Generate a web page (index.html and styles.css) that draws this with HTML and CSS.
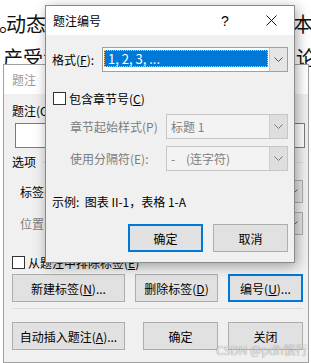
FILE: index.html
```html
<!DOCTYPE html>
<html lang="zh-CN">
<head>
  <meta charset="UTF-8">
  <title>题注编号</title>
  <link rel="stylesheet" href="styles.css">
</head>
<body>
  <div class="doc">
    <div class="doc-line line-1"><span><span class="stop">。</span>动态</span><span>本和</span></div>
    <div class="doc-line line-2"><span>产受汉</span><span>论七</span></div>
  </div>

  <div class="win win-back">
    <div class="titlebar titlebar-back">题注</div>
    <div class="back-body">
      <div class="back-label">题注(C):</div>
      <div class="back-input"></div>
      <div class="group-row">
        <span>选项</span>
        <span class="group-line"></span>
      </div>
      <div class="back-row">
        <span class="indent">标签(L):</span>
        <div class="combo combo-back"><span class="combo-value"></span><span class="combo-arrow"><svg width="9" height="5" viewBox="0 0 9 5"><polyline points="0.5,0.5 4.5,4.5 8.5,0.5" fill="none" stroke="#606060"/></svg></span></div>
      </div>
      <div class="back-row row-pos">
        <span class="indent disabled">位置(P):</span>
        <div class="combo combo-back"><span class="combo-value"></span><span class="combo-arrow"><svg width="9" height="5" viewBox="0 0 9 5"><polyline points="0.5,0.5 4.5,4.5 8.5,0.5" fill="none" stroke="#606060"/></svg></span></div>
      </div>
      <div class="check-row back-check">
        <span class="checkbox"></span>
        <span>从题注中排除标签(<u>E</u>)</span>
      </div>
      <div class="btn-row back-btns">
        <button class="btn btn-wide">新建标签(<u>N</u>)...</button>
        <button class="btn btn-mid">删除标签(<u>D</u>)</button>
        <button class="btn btn-default">编号(<u>U</u>)...</button>
      </div>
      <div class="separator"></div>
      <div class="btn-row back-btns-2">
        <button class="btn btn-wide">自动插入题注(<u>A</u>)...</button>
        <button class="btn btn-ok">确定</button>
        <button class="btn">关闭</button>
      </div>
    </div>
  </div>

  <div class="win win-front">
    <div class="titlebar titlebar-front">
      <span class="title-text">题注编号</span>
      <span class="tb-btn">?</span>
      <span class="tb-btn">
        <svg width="11" height="11" viewBox="0 0 11 11"><path d="M0.5 0.5 L10.5 10.5 M10.5 0.5 L0.5 10.5" stroke="#111" stroke-width="1"/></svg>
      </span>
    </div>
    <div class="front-body">
      <div class="form-row row-format">
        <span>格式(<u>F</u>):</span>
        <div class="combo combo-active">
          <span class="combo-value"><span class="selected">1, 2, 3, ...</span></span>
          <span class="combo-arrow"><svg width="9" height="5" viewBox="0 0 9 5"><polyline points="0.5,0.5 4.5,4.5 8.5,0.5" fill="none" stroke="#505050"/></svg></span>
        </div>
      </div>
      <div class="check-row front-check">
        <span class="checkbox"></span>
        <span>包含章节号(<u>C</u>)</span>
      </div>
      <div class="form-row row-sub">
        <span class="sub-label disabled">章节起始样式(P)</span>
        <div class="combo combo-disabled">
          <span class="combo-value">标题 1</span>
          <span class="combo-arrow"><svg width="9" height="5" viewBox="0 0 9 5"><polyline points="0.5,0.5 4.5,4.5 8.5,0.5" fill="none" stroke="#7a7a7a"/></svg></span>
        </div>
      </div>
      <div class="form-row row-sub row-sep">
        <span class="sub-label disabled">使用分隔符(E):</span>
        <div class="combo combo-disabled">
          <span class="combo-value">-&nbsp;&nbsp;&nbsp;&nbsp;(连字符)</span>
          <span class="combo-arrow"><svg width="9" height="5" viewBox="0 0 9 5"><polyline points="0.5,0.5 4.5,4.5 8.5,0.5" fill="none" stroke="#7a7a7a"/></svg></span>
        </div>
      </div>
      <div class="example">示例:&nbsp; 图表 II-1，表格 1-A</div>
      <div class="btn-row front-btns">
        <button class="btn btn-default">确定</button>
        <button class="btn">取消</button>
      </div>
    </div>
  </div>

  <div class="watermark">CSDN @pdh慎行</div>
</body>
</html>
```

FILE: styles.css
```css
body {
  margin: 0;
  width: 311px;
  height: 363px;
  overflow: hidden;
  position: relative;
  background-color: #fff;
  font-family: "Noto Sans CJK SC", sans-serif;
  font-size: 12px;
  color: #000;
}

u {
  text-underline-offset: 1px;
}

/* document behind the dialogs */
.doc {
  font-size: 20px;
  line-height: 20px;
  color: #111;
}

.doc-line {
  display: grid;
  grid-template-columns: 293px auto;
  white-space: nowrap;
}

.line-1 {
  padding-top: 14px;
}

.line-2 {
  padding-top: 14px;
  padding-left: 3px;
}

.stop {
  margin-left: -1px;
  margin-right: -13px;
}

/* windows */
.win {
  position: absolute;
  box-sizing: border-box;
  background-color: #f0f0f0;
}

.win-back {
  left: 3px;
  top: 64px;
  width: 306px;
  height: 299px;
  border: 1px solid #a0a0a0;
}

.win-front {
  left: 45px;
  top: 5px;
  width: 250px;
  height: 258px;
  border: 1px solid #8a8a8a;
  box-shadow: 2px 3px 12px rgba(0, 0, 0, 0.35);
}

.titlebar {
  height: 29px;
  background-color: #fff;
  display: flex;
  align-items: center;
}

.titlebar-back {
  padding-left: 8px;
  color: #999;
}

.titlebar-front {
  padding-left: 7px;
}

.title-text {
  flex: 1;
}

.tb-btn {
  width: 46px;
  height: 29px;
  display: flex;
  align-items: center;
  justify-content: center;
  font-family: "Liberation Sans", sans-serif;
  font-size: 14px;
}

.disabled {
  color: #7d7d7d;
}

/* combo boxes */
.combo {
  display: flex;
  height: 25px;
  box-sizing: border-box;
  border: 1px solid #adadad;
  background-color: #fff;
}

.combo-value {
  flex: 1;
  display: flex;
  align-items: center;
  padding-left: 3px;
}

.combo-arrow {
  width: 17px;
  display: flex;
  align-items: center;
  justify-content: center;
  background-color: #e5e5e5;
  border-left: 1px solid #c8c8c8;
}

.combo-active {
  width: 186px;
  margin-left: auto;
  border-color: #a0a0a0;
}

.combo-active .combo-value {
  padding: 2px 1px 4px 1px;
  align-items: stretch;
}

.selected {
  flex: 1;
  display: flex;
  align-items: center;
  padding-left: 4px;
  background-color: #0078d7;
  color: #fff;
  outline: 1px dotted #f2c38a;
  outline-offset: -1px;
  font-size: 13px;
}

.combo-disabled {
  width: 122px;
  margin-left: auto;
  border-color: #c6c6c6;
  background-color: #f3f3f3;
  color: #808080;
}

.combo-disabled .combo-value {
  padding-left: 4px;
}

.combo-disabled .combo-arrow {
  background-color: #dedede;
  border-left-color: #cfcfcf;
}

.combo-back {
  width: 212px;
  margin-left: auto;
  height: 23px;
}

/* checkbox */
.check-row {
  display: flex;
  align-items: center;
  height: 13px;
  line-height: 13px;
}

.checkbox {
  width: 13px;
  height: 13px;
  box-sizing: border-box;
  border: 1px solid #333;
  background-color: #fff;
  margin-right: 3px;
}

/* buttons */
.btn-row {
  display: flex;
}

.btn {
  width: 75px;
  height: 28px;
  box-sizing: border-box;
  border: 1px solid #adadad;
  background-color: #e1e1e1;
  font-family: inherit;
  font-size: 12px;
  color: #000;
  padding: 0;
}

.btn-default {
  border: 2px solid #0078d7;
}

/* back dialog body */
.back-body {
  padding: 0 0 0 8px;
}

.back-label {
  margin-top: 9px;
  line-height: 16px;
}

.back-input {
  margin-top: 4px;
  margin-left: 3px;
  width: 290px;
  height: 25px;
  box-sizing: border-box;
  border: 1px solid #7a7a7a;
  background-color: #fff;
}

.group-row {
  display: flex;
  align-items: center;
  margin-top: 6px;
  line-height: 16px;
}

.group-line {
  flex: 1;
  height: 1px;
  background-color: #dcdcdc;
  margin: 0 5px 0 6px;
}

.back-row {
  display: flex;
  align-items: center;
  height: 23px;
  margin-top: 10px;
  padding-right: 5px;
}

.row-pos {
  margin-top: 9px;
}

.indent {
  padding-left: 8px;
}

.back-check {
  margin-top: 21px;
}

.back-btns {
  margin-top: 5px;
}

.btn-wide {
  width: 113px;
}

.btn-mid {
  width: 83px;
  margin-left: 10px;
  margin-right: 10px;
}

.separator {
  margin-top: 6px;
  margin-right: 5px;
  height: 1px;
  background-color: #dcdcdc;
}

.back-btns-2 {
  margin-top: 13px;
}

.btn-ok {
  margin-left: 18px;
  margin-right: 10px;
}

/* front dialog body */
.front-body {
  padding: 12px 6px 0 6px;
}

.form-row {
  display: flex;
  align-items: center;
  height: 25px;
}

.front-check {
  margin-top: 20px;
  margin-left: 1px;
}

.row-sub {
  margin-top: 9px;
}

.row-sep {
  margin-top: 7px;
}

.sub-label {
  padding-left: 18px;
}

.example {
  margin-top: 23px;
  line-height: 16px;
}

.front-btns {
  margin-top: 14px;
  justify-content: flex-end;
  gap: 10px;
}

.watermark {
  position: absolute;
  left: 216px;
  top: 343px;
  font-size: 12px;
  line-height: 14px;
  color: rgba(255, 255, 255, 0.75);
  text-shadow: 0 0 1px rgba(0, 0, 0, 0.55);
}
```
